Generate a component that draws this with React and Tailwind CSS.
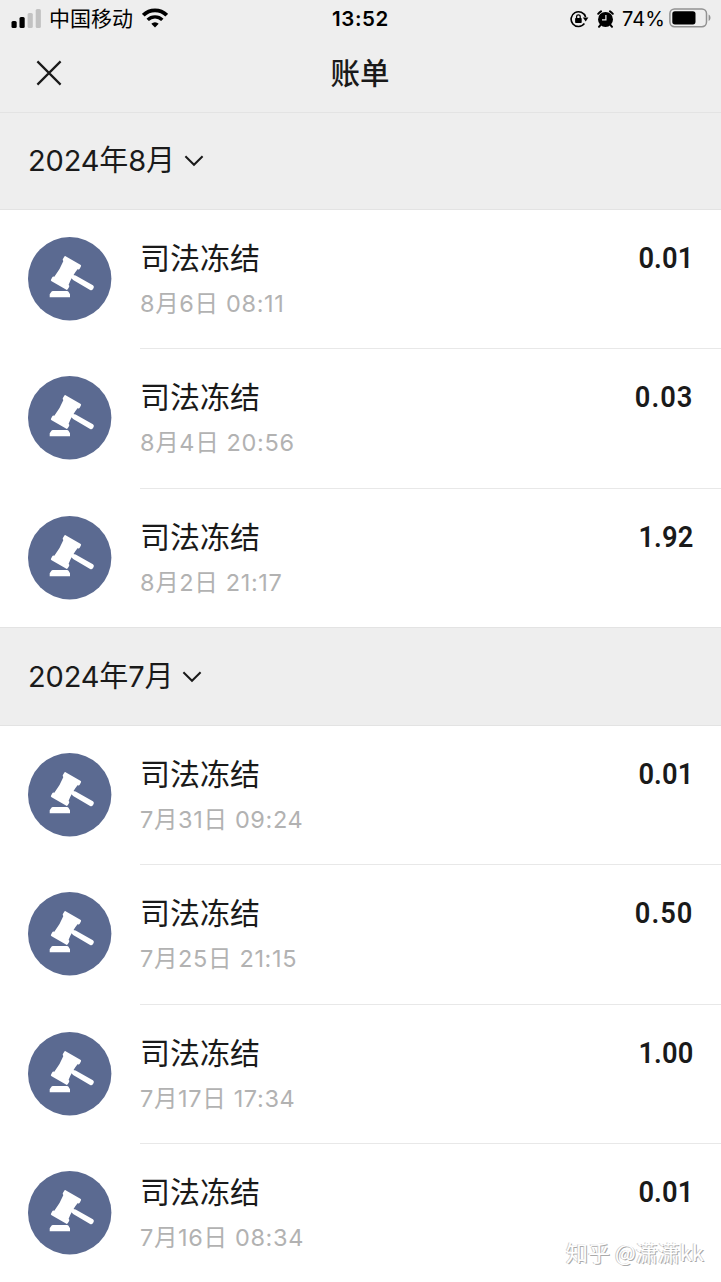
import clsx from "clsx";

const MONTHS = [
  {
    title: "2024年8月",
    bills: [
      { date: "8月6日 08:11", amount: "0.01" },
      { date: "8月4日 20:56", amount: "0.03" },
      { date: "8月2日 21:17", amount: "1.92" },
    ],
  },
  {
    title: "2024年7月",
    bills: [
      { date: "7月31日 09:24", amount: "0.01" },
      { date: "7月25日 21:15", amount: "0.50" },
      { date: "7月17日 17:34", amount: "1.00" },
      { date: "7月16日 08:34", amount: "0.01" },
    ],
  },
];

function SignalIcon() {
  return (
    <svg className="h-[20px] w-[30px]" viewBox="0 0 30 20">
      <rect x="0.5" y="12" width="5.2" height="7" rx="1.5" fill="#000" />
      <rect x="8.5" y="8" width="5.2" height="11" rx="1.5" fill="#000" />
      <rect x="16.6" y="4" width="5.2" height="15" rx="1.5" fill="#c2c2c2" />
      <rect x="24.7" y="0" width="5.2" height="19" rx="1.5" fill="#c2c2c2" />
    </svg>
  );
}

function WifiIcon() {
  return (
    <svg className="h-[20px] w-[26px]" viewBox="0 0 26 20" fill="none" stroke="#000">
      <path d="M1.3 7.2a16.6 16.6 0 0 1 23.4 0" strokeWidth="3.8" />
      <path d="M5.7 11.9a10.4 10.4 0 0 1 14.6 0" strokeWidth="3.4" />
      <path d="M13 19.6l-3.7-3.8a5.3 5.3 0 0 1 7.4 0z" fill="#000" stroke="none" />
    </svg>
  );
}

function RotationLockIcon() {
  return (
    <svg className="h-[18px] w-[19px]" viewBox="0 0 19 18" fill="none" stroke="#000">
      <path d="M15.6 7A7.4 7.4 0 1 0 14.4 13.6" strokeWidth="1.6" />
      <path d="M12.8 7.4h5.6l-2.7 4z" fill="#000" stroke="none" />
      <rect x="5.1" y="8" width="6.6" height="5" rx="0.8" fill="#000" stroke="none" />
      <path d="M6.6 8.4V6.6a1.8 1.8 0 0 1 3.6 0v1.8" strokeWidth="1.3" />
    </svg>
  );
}

function AlarmIcon() {
  return (
    <svg className="h-[18px] w-[17px]" viewBox="0 0 17 18">
      <circle cx="8.5" cy="9.4" r="7.5" fill="#000" />
      <path
        d="M1.2 3.8a12 12 0 0 1 2.8-2.4M15.8 3.8a12 12 0 0 0-2.8-2.4M3.6 14.8l-1.6 2M13.4 14.8l1.6 2"
        stroke="#000"
        strokeWidth="2"
        strokeLinecap="round"
      />
      <path d="M8.9 5v4.8H5" fill="none" stroke="#eee" strokeWidth="1.2" />
    </svg>
  );
}

function BatteryIcon() {
  return (
    <svg className="h-[20px] w-[43px]" viewBox="0 0 43 20">
      <rect x="0.9" y="0.9" width="36.6" height="17.8" rx="4.6" fill="none" stroke="#929292" strokeWidth="1.5" />
      <rect x="3.3" y="3.2" width="23.2" height="13.2" rx="2.6" fill="#000" />
      <path d="M39.6 6.6c1.2.5 1.9 1.7 1.9 3.2s-.7 2.7-1.9 3.2z" fill="#929292" />
    </svg>
  );
}

function GavelIcon() {
  return (
    <svg className="size-[84px] shrink-0" viewBox="0 0 84 84">
      <circle cx="41.7" cy="41.7" r="41.7" fill="#5b6a91" />
      <g fill="#fff">
        <g transform="translate(38 36) rotate(30)">
          <rect x="-9.7" y="-14.4" width="19.4" height="5.2" rx="1.4" />
          <path d="M-8.4 -10.5H8.4Q6.6 0 8.4 10.5H-8.4Q-6.8 0 -8.4 -10.5Z" />
          <rect x="-9.7" y="9.2" width="19.4" height="5.2" rx="1.4" />
          <path d="M6 -1.4L9.6 -2.6L29.4 -2.9Q31.4 -2.8 31.4 0T29.4 2.7L9.6 2.4L6 1.4Z" />
        </g>
        <path d="M24.8 53.9H39Q40 53.9 40.5 54.8L42 57.2V60.2H21.7V57.2L23.6 54.6Q24 53.9 24.8 53.9Z" />
      </g>
    </svg>
  );
}

function StatusBar() {
  return (
    <div className="grid h-9 grid-cols-[1fr_auto_1fr] items-center text-black">
      <div className="flex items-center pl-[11px]">
        <SignalIcon />
        <span className="ml-2 pt-px text-[21px] leading-9">中国移动</span>
        <span className="ml-[9px] -mt-px">
          <WifiIcon />
        </span>
      </div>
      <span className="pt-px text-[20.5px] font-semibold tracking-[0.6px]">13:52</span>
      <div className="flex items-center justify-end pr-[9px]">
        <RotationLockIcon />
        <span className="ml-2">
          <AlarmIcon />
        </span>
        <span className="ml-2 pt-px text-[20px] tracking-[0.1px]">74%</span>
        <span className="ml-1 -mt-px">
          <BatteryIcon />
        </span>
      </div>
    </div>
  );
}

function MonthHeader({ title, first }) {
  return (
    <div
      className={clsx(
        "flex items-center border-y border-[#e3e3e3] bg-[#eeeeee] pl-7",
        first ? "h-[98px]" : "h-[99px] pt-0.5"
      )}
    >
      <h2 className="text-[29px] leading-10 tracking-[-0.15px]">{title}</h2>
      <svg className="ml-[9px] h-3 w-5" viewBox="0 0 20 12" fill="none" stroke="#1a1a1a" strokeWidth="2">
        <path d="M1.4 1.2L10 9.8L18.6 1.2" />
      </svg>
    </div>
  );
}

function BillRow({ bill, last }) {
  return (
    <li className={clsx("flex pl-7", last ? "h-[138.2px]" : "h-[139.4px]")}>
      <div className="pt-[26.8px]">
        <GavelIcon />
      </div>
      <div className={clsx("ml-7 flex flex-1 justify-between pr-7", !last && "border-b border-[#e8e8e8]")}>
        <div className="pt-[28px]">
          <p className="text-[30px] leading-10">司法冻结</p>
          <p className="mt-2 text-[23.5px] leading-9 tracking-[0.65px] text-[#b2b2b2]">{bill.date}</p>
        </div>
        {/* the digit 1 is set tighter than the others */}
        <p
          className={clsx(
            "origin-right scale-x-[0.91] pt-[28px] font-[Roboto] text-[30px] leading-10 font-semibold",
            bill.amount.includes("1") ? "tracking-[0.1px]" : "tracking-[1.1px]"
          )}
        >
          {bill.amount}
        </p>
      </div>
    </li>
  );
}

export default function App() {
  return (
    <main className="relative h-[1282px] w-[721px] overflow-hidden bg-white font-['Inter','Noto_Sans_CJK_SC',sans-serif] text-[#1a1a1a]">
      <header className="h-28 bg-[#eeeeee]">
        <StatusBar />
        <div className="grid h-[74px] grid-cols-[1fr_auto_1fr] items-center">
          <svg className="ml-9 size-[26px]" viewBox="0 0 26 26" fill="none" stroke="#1a1a1a" strokeWidth="2.2">
            <path d="M1.4 1.4L24.6 24.6M24.6 1.4L1.4 24.6" />
          </svg>
          <h1 className="-ml-px text-[29.5px] leading-10 font-medium">账单</h1>
        </div>
      </header>

      {MONTHS.map((month, i) => (
        <section key={month.title}>
          <MonthHeader title={month.title} first={i === 0} />
          <ul>
            {month.bills.map((bill, j) => (
              <BillRow key={bill.date} bill={bill} last={j === month.bills.length - 1} />
            ))}
          </ul>
        </section>
      ))}

      {/* Watermark over the list */}
      <div className="absolute right-[17px] bottom-[15px] font-['Noto_Sans_CJK_SC',sans-serif] text-[22px] leading-8 text-white [text-shadow:-1px_0_0_#ccc,1px_1px_0_#aaa]">
        知乎 @潇潇kk
      </div>
    </main>
  );
}
